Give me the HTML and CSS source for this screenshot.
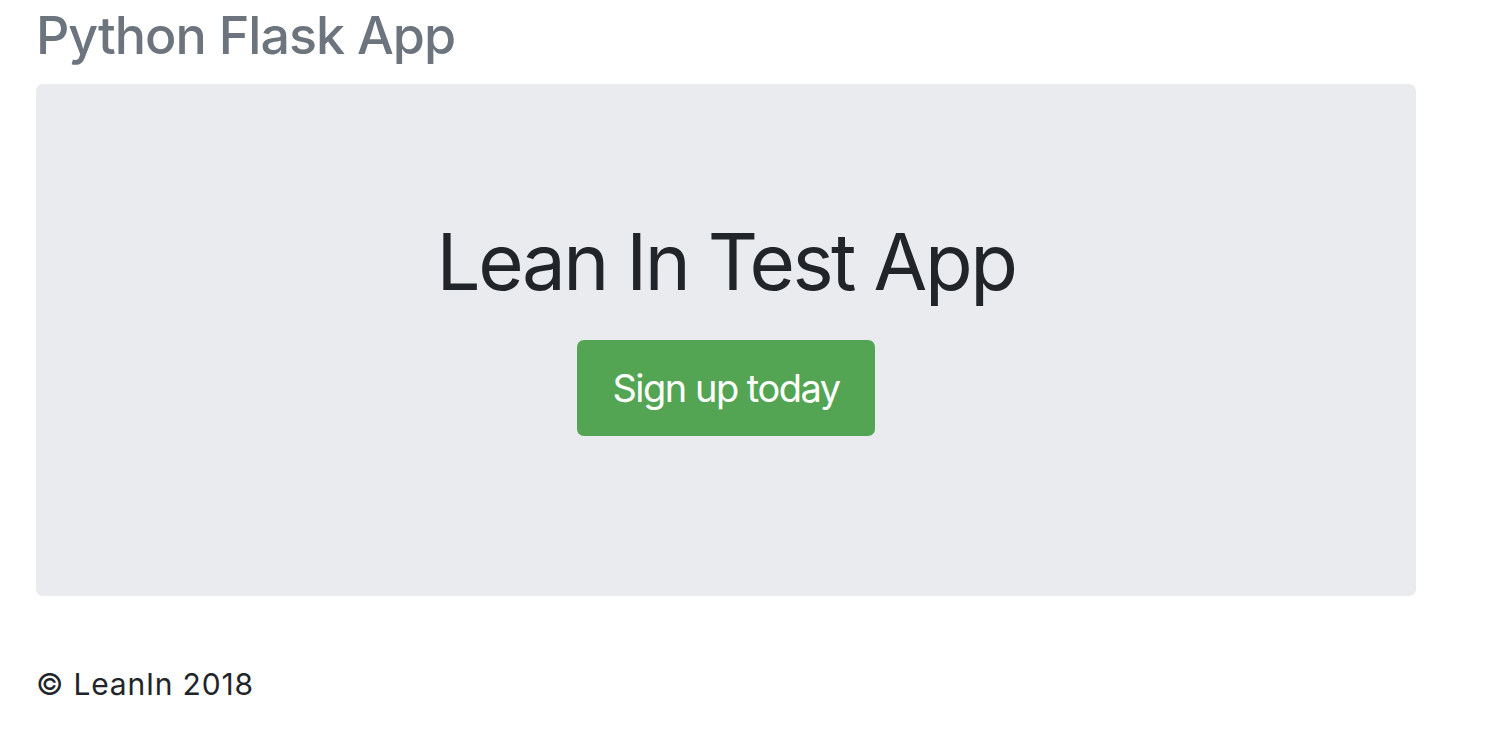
FILE: index.html
```html
<!DOCTYPE html>
<html lang="en">
<head>
<meta charset="utf-8">
<title>Python Flask App</title>
<link rel="stylesheet" href="styles.css">
</head>
<body>
<div class="container">
  <header class="header">
    <h3 class="brand">Python Flask App</h3>
  </header>
  <div class="jumbotron">
    <h1 class="display">Lean In Test App</h1>
    <a class="btn-success" href="#">Sign up today</a>
  </div>
  <footer class="footer">
    <p>&copy; LeanIn 2018</p>
  </footer>
</div>
</body>
</html>
```
FILE: styles.css
```css
html, body {
  margin: 0;
  padding: 0;
  background: #fff;
}
body {
  font-family: Inter, "Noto Sans", "Liberation Sans", sans-serif;
  color: #212529;
}
.container {
  padding: 0 36px;
}
.header {
  padding-top: 5px;
  margin-bottom: 17px;
}
.brand {
  margin: 0;
  font-size: 52px;
  line-height: 62px;
  font-weight: 500;
  color: #6c757d;
  letter-spacing: -1px;
}
.jumbotron {
  width: 1380px;
  box-sizing: border-box;
  background: #e9ebef;
  border-radius: 7px;
  padding: 131px 0 160px;
  display: flex;
  flex-direction: column;
  align-items: center;
}
.display {
  margin: 0 0 31px;
  font-size: 78px;
  line-height: 94px;
  font-weight: 400;
  letter-spacing: -2.5px;
  color: #212529;
}
.btn-success {
  display: inline-flex;
  align-items: center;
  height: 96px;
  padding: 0 35px;
  box-sizing: border-box;
  background: #53a553;
  color: #fff;
  border-radius: 7px;
  font-size: 38px;
  letter-spacing: -1.5px;
  text-decoration: none;
}
.footer {
  padding-top: 70px;
}
.footer p {
  margin: 0;
  font-size: 30px;
  line-height: 36px;
  letter-spacing: 0.8px;
}
```
